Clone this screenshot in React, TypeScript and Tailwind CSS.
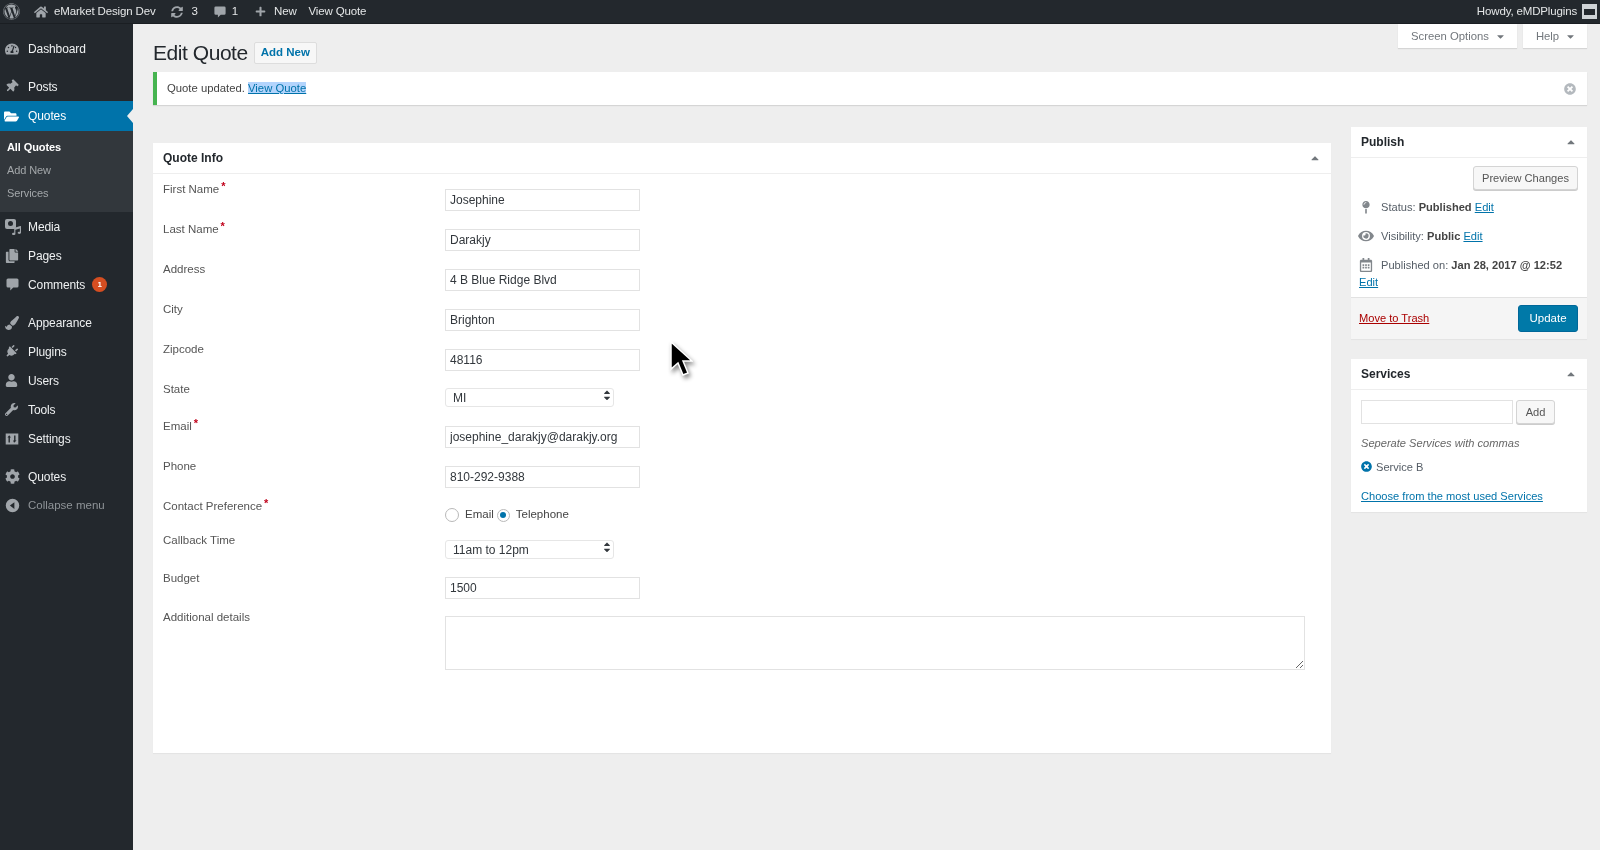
import type { ReactNode } from "react"
import {
  FaWordpress, FaHome, FaSyncAlt, FaPlus, FaTachometerAlt, FaThumbtack, FaFolderOpen,
  FaCopy, FaPaintBrush, FaPlug, FaUser, FaWrench, FaCog, FaEye, FaRegCalendarAlt, FaTimesCircle,
  FaMapPin, FaCaretDown, FaCaretUp, FaMusic,
} from "react-icons/fa"

function SettingsIcon() {
  return (
    <svg viewBox="0 0 20 20" className="w-[14px] h-[14px]" fill="currentColor">
      <path d="M1 2h18v16H1z M6 4.500 3.500 8H5v7h2V8h1.500z M13 15.500 16.500 12H15V5h-2v7h-1.500z" fillRule="evenodd" />
    </svg>
  )
}

function BubbleIcon({ size }: { size: string }) {
  return (
    <svg viewBox="0 0 20 20" className={size} fill="currentColor">
      <path d="M4 2h12a2 2 0 0 1 2 2v8a2 2 0 0 1-2 2h-5l-4 4v-4H4a2 2 0 0 1-2-2V4a2 2 0 0 1 2-2z" />
    </svg>
  )
}

function CollapseIcon() {
  return (
    <svg viewBox="0 0 20 20" className="w-[15px] h-[15px]" fill="currentColor">
      <path d="M10 1a9 9 0 1 1 0 18 9 9 0 0 1 0-18z M12.500 5.500 6.500 10l6 4.500z" fillRule="evenodd" />
    </svg>
  )
}

function MediaIcon() {
  return (
    <span className="relative block w-4 h-4">
      <span className="absolute left-0 top-0 w-[11px] h-[10px] rounded-[2px] bg-[#a0a5aa]" />
      <span className="absolute left-[3px] top-[2px] w-[5px] h-[5px] rounded-full bg-[#23282d]" />
      <FaMusic className="absolute right-0 bottom-0 text-[9px]" />
    </span>
  )
}

type MenuItem = { label: string; icon: ReactNode; gap?: boolean; badge?: boolean; dim?: boolean }

const topItems: MenuItem[] = [
  { label: "Dashboard", icon: <FaTachometerAlt className="text-[14px]" /> },
  { label: "Posts", icon: <FaThumbtack className="text-[13px] rotate-45" />, gap: true },
]

const lowerItems: MenuItem[] = [
  { label: "Media", icon: <MediaIcon /> },
  { label: "Pages", icon: <FaCopy className="text-[14px]" /> },
  { label: "Comments", icon: <BubbleIcon size="w-[15px] h-[15px]" />, badge: true },
  { label: "Appearance", icon: <FaPaintBrush className="text-[14px]" />, gap: true },
  { label: "Plugins", icon: <FaPlug className="text-[13px] rotate-45" /> },
  { label: "Users", icon: <FaUser className="text-[13px]" /> },
  { label: "Tools", icon: <FaWrench className="text-[13px]" /> },
  { label: "Settings", icon: <SettingsIcon /> },
  { label: "Quotes", icon: <FaCog className="text-[15px]" />, gap: true },
  { label: "Collapse menu", icon: <CollapseIcon />, dim: true },
]

function SideItem({ item }: { item: MenuItem }) {
  return (
    <div className={`flex items-center h-[29px] pl-[5px] ${item.gap ? "mt-[9px]" : ""}`}>
      <span className="w-[23px] flex justify-start text-[#a0a5aa]">{item.icon}</span>
      <span className={item.dim ? "text-[11.500px] text-[#8f9498]" : "text-[12px] tracking-[-0.1px] text-[#eef0f1]"}>{item.label}</span>
      {item.badge && (
        <span className="ml-[7px] w-[15px] h-[15px] rounded-full bg-[#d54e21] text-white text-[8px] font-bold flex items-center justify-center">1</span>
      )}
    </div>
  )
}

function Sidebar() {
  return (
    <aside className="w-[133px] shrink-0 bg-[#23282d] pt-[10px]">
      {topItems.map((item) => (
        <SideItem key={item.label} item={item} />
      ))}
      <div className="relative flex items-center h-[30px] pl-[4px] bg-[#0073aa] text-white">
        <span className="w-[24px]"><FaFolderOpen className="text-[15px]" /></span>
        <span className="text-[12px] tracking-[-0.1px]">Quotes</span>
        <span className="absolute right-0 top-[8px] border-y-[7px] border-r-[6px] border-y-transparent border-r-[#eeeeee]" />
      </div>
      <div className="bg-[#32373c] h-[81px] pl-[7px] pt-[5px] flex flex-col text-[11px] tracking-[-0.1px]">
        <span className="h-[23px] leading-[23px] font-bold text-white">All Quotes</span>
        <span className="h-[23px] leading-[23px] text-[#a3a7aa]">Add New</span>
        <span className="h-[23px] leading-[23px] text-[#a3a7aa]">Services</span>
      </div>
      <div>
        {lowerItems.map((item) => (
          <SideItem key={item.label + item.gap} item={item} />
        ))}
      </div>
    </aside>
  )
}

function TopBar() {
  return (
    <header className="h-[24px] bg-[#23282d] flex items-center text-[11.500px] text-[#e4e6e7] tracking-[-0.15px] border-b border-[#1a1e22]">
      <FaWordpress className="ml-[3px] text-[17px] text-[#a0a5aa]" />
      <FaHome className="ml-[14px] text-[14px] text-[#a0a5aa]" />
      <span className="ml-[6px]">eMarket Design Dev</span>
      <FaSyncAlt className="ml-[16px] text-[12px] text-[#a0a5aa]" />
      <span className="ml-[8px]">3</span>
      <span className="ml-[15px] text-[#a0a5aa]"><BubbleIcon size="w-[14px] h-[14px]" /></span>
      <span className="ml-[5px]">1</span>
      <FaPlus className="ml-[17px] text-[11px] text-[#a0a5aa]" />
      <span className="ml-[8px]">New</span>
      <span className="ml-[12px]">View Quote</span>
      <span className="ml-auto">Howdy, eMDPlugins</span>
      <span className="ml-[5px] mr-[3px] relative w-[15px] h-[15px] bg-[#cfd3d6]">
        <span className="absolute left-[2px] top-[5px] w-[11px] h-[6px] bg-[#23282d]" />
      </span>
    </header>
  )
}

function Req() {
  return <sup className="text-[#c0001a] font-bold text-[11px] ml-[2px] top-[-3px]">*</sup>
}

type Row = { label: string; req?: boolean; h: string; field: ReactNode }

function TextField({ value, top = "mt-[10px]" }: { value: string; top?: string }) {
  return (
    <input
      readOnly
      value={value}
      className={`${top} block w-[195px] h-[22px] px-[4px] bg-white border border-[#e2e2e2] text-[12px] text-[#32373c] outline-none`}
    />
  )
}

function SelectField({ value, top }: { value: string; top: string }) {
  return (
    <div className={`relative ${top} w-[169px] h-[19px]`}>
      <select className="appearance-none w-full h-full pl-[7px] bg-white border border-[#e6e6e6] rounded-[3px] text-[12px] text-[#32373c] outline-none" defaultValue={value}>
        <option>{value}</option>
      </select>
      <span className="absolute right-[2px] top-[2px] flex flex-col text-[#32373c] text-[10px] leading-none pointer-events-none">
        <FaCaretUp className="-mb-[4px]" />
        <FaCaretDown />
      </span>
    </div>
  )
}

const rows: Row[] = [
  { label: "First Name", req: true, h: "h-[40px]", field: <TextField value="Josephine" /> },
  { label: "Last Name", req: true, h: "h-[40px]", field: <TextField value="Darakjy" /> },
  { label: "Address", h: "h-[40px]", field: <TextField value="4 B Blue Ridge Blvd" /> },
  { label: "City", h: "h-[40px]", field: <TextField value="Brighton" /> },
  { label: "Zipcode", h: "h-[40px]", field: <TextField value="48116" /> },
  { label: "State", h: "h-[37px]", field: <SelectField value="MI" top="mt-[6px]" /> },
  { label: "Email", req: true, h: "h-[40px]", field: <TextField value="josephine_darakjy@darakjy.org" /> },
  { label: "Phone", h: "h-[40px]", field: <TextField value="810-292-9388" /> },
  {
    label: "Contact Preference",
    req: true,
    h: "h-[34px]",
    field: (
      <div className="flex items-center mt-[11px] h-[16px] text-[11.500px] text-[#444]">
        <span className="w-[14px] h-[14px] rounded-full border border-[#b9b9b9] bg-white" />
        <span className="ml-[6px]">Email</span>
        <span className="ml-[3px] w-[13px] h-[13px] rounded-full border border-[#b9b9b9] bg-white flex items-center justify-center">
          <span className="w-[6px] h-[6px] rounded-full bg-[#0073aa]" />
        </span>
        <span className="ml-[6px]">Telephone</span>
      </div>
    ),
  },
  { label: "Callback Time", h: "h-[38px]", field: <SelectField value="11am to 12pm" top="mt-[7px]" /> },
  { label: "Budget", h: "h-[39px]", field: <TextField value="1500" top="mt-[9px]" /> },
  {
    label: "Additional details",
    h: "h-[70px]",
    field: (
      <textarea readOnly className="mt-[9px] block w-[860px] h-[54px] bg-white border border-[#e2e2e2] outline-none" />
    ),
  },
]

function BoxHeader({ title }: { title: string }) {
  return (
    <div className="h-[31px] flex items-center justify-between pl-[10px] pr-[10px] border-b border-[#eeeeee]">
      <span className="text-[12px] font-bold text-[#23282d]">{title}</span>
      <FaCaretUp className="text-[12px] text-[#72777c]" />
    </div>
  )
}

function PublishBox() {
  return (
    <section className="bg-white shadow-[0_1px_1px_rgba(0,0,0,0.04)]">
      <BoxHeader title="Publish" />
      <div className="h-[139px] pl-[8px] pr-[9px] pt-[8px] text-[11.100px] text-[#555d66]">
        <div className="flex justify-end">
          <button className="h-[24px] w-[105px] border border-[#d4d4d4] rounded-[3px] bg-[#f7f7f7] text-[11.100px] text-[#555] shadow-[0_1px_0_#ccc]">Preview Changes</button>
        </div>
        <div className="flex items-center mt-[7px] h-[20px]">
          <FaMapPin className="-ml-[3px] w-[20px] text-[13px] text-[#82878c]" />
          <span className="ml-[5px]">Status: <b className="text-[#444]">Published</b> <u className="text-[#0073aa]">Edit</u></span>
        </div>
        <div className="flex items-center mt-[9px] h-[20px]">
          <FaEye className="-ml-[3px] w-[20px] text-[14px] text-[#82878c]" />
          <span className="ml-[5px]">Visibility: <b className="text-[#444]">Public</b> <u className="text-[#0073aa]">Edit</u></span>
        </div>
        <div className="flex items-center mt-[9px] h-[20px]">
          <FaRegCalendarAlt className="-ml-[3px] w-[20px] text-[14px] text-[#82878c]" />
          <span className="ml-[5px] whitespace-nowrap">Published on: <b className="text-[#444]">Jan 28, 2017 @ 12:52</b></span>
        </div>
        <u className="block text-[#0073aa] leading-[14px]">Edit</u>
      </div>
      <div className="h-[42px] bg-[#f5f5f5] border-t border-[#e2e2e2] flex items-center justify-between pl-[8px] pr-[9px]">
        <u className="text-[11.100px] text-[#a00]">Move to Trash</u>
        <button className="w-[60px] h-[27px] rounded-[3px] bg-[#0079a8] border border-[#006799] text-white text-[11.500px]">Update</button>
      </div>
    </section>
  )
}

function ServicesBox() {
  return (
    <section className="mt-[20px] bg-white shadow-[0_1px_1px_rgba(0,0,0,0.04)]">
      <BoxHeader title="Services" />
      <div className="h-[122px] px-[10px] pt-[10px] text-[11.100px] text-[#555d66]">
        <div className="flex items-center">
          <input readOnly className="w-[152px] h-[24px] border border-[#e2e2e2] bg-white outline-none" />
          <button className="ml-[3px] w-[39px] h-[24px] border border-[#d4d4d4] rounded-[3px] bg-[#f7f7f7] text-[#555] shadow-[0_1px_0_#ccc]">Add</button>
        </div>
        <p className="mt-[11px] italic text-[11.100px] text-[#666]">Seperate Services with commas</p>
        <div className="flex items-center mt-[7px]">
          <FaTimesCircle className="text-[11px] text-[#0073aa]" />
          <span className="ml-[4px]">Service B</span>
        </div>
        <u className="block mt-[13px] text-[#0073aa]">Choose from the most used Services</u>
      </div>
    </section>
  )
}

function Cursor() {
  return (
    <svg viewBox="0 0 24 38" className="absolute left-[669px] top-[341px] w-[24px] h-[38px] drop-shadow-[2px_3px_2px_rgba(0,0,0,0.45)]">
      <path d="M2 1v27l7-6 5 12 5-2-5-12h9z" fill="#000" stroke="#fff" strokeWidth="1.500" />
    </svg>
  )
}

export default function App() {
  return (
    <div className="relative w-[1600px] h-[850px] overflow-hidden flex flex-col bg-[#eeeeee] blur-[0.6px] font-['Liberation_Sans',Arial,sans-serif]">
      <TopBar />
      <div className="flex flex-1 min-h-0">
        <Sidebar />
        <main className="flex-1 pl-[20px] pr-[13px]">
          <div className="h-[48px] flex justify-between">
            <div className="flex items-center h-[58px]">
              <h1 className="text-[21px] text-[#23282d] tracking-[-0.45px]">Edit Quote</h1>
              <button className="ml-[6px] h-[22px] px-[6px] border border-[#dddddd] rounded-[2px] bg-[#f7f7f7] text-[11.500px] font-bold text-[#0073aa]">Add New</button>
            </div>
            <div className="flex gap-[6px]">
              <div className="w-[119px] h-[24px] pt-[1px] pl-[2px] bg-white shadow-[0_1px_1px_rgba(0,0,0,0.1)] flex items-center justify-center gap-[6px] text-[11.300px] text-[#72777c]">
                Screen Options <FaCaretDown className="text-[11px]" />
              </div>
              <div className="w-[64px] h-[24px] pt-[1px] pl-[2px] bg-white shadow-[0_1px_1px_rgba(0,0,0,0.1)] flex items-center justify-center gap-[6px] text-[11.300px] text-[#72777c]">
                Help <FaCaretDown className="text-[11px]" />
              </div>
            </div>
          </div>
          <div className="h-[33px] bg-white border-l-[4px] border-[#46b450] flex items-center pl-[10px] pr-[11px] justify-between shadow-[0_1px_1px_rgba(0,0,0,0.1)]">
            <span className="text-[11.300px] text-[#444]">
              Quote updated. <u className="bg-[#b3d4fc] text-[#0073aa]">View Quote</u>
            </span>
            <FaTimesCircle className="text-[12px] text-[#b4b9be]" />
          </div>
          <div className="flex gap-[20px] mt-[22px]">
            <section className="mt-[16px] w-[1178px] h-[610px] bg-white shadow-[0_1px_1px_rgba(0,0,0,0.04)]">
              <BoxHeader title="Quote Info" />
              <div className="pt-[5px] pl-[10px]">
                {rows.map((row) => (
                  <div key={row.label} className={`flex ${row.h}`}>
                    <div className="w-[282px] shrink-0 leading-[20px] text-[11.500px] text-[#555]">
                      {row.label}
                      {row.req && <Req />}
                    </div>
                    <div>{row.field}</div>
                  </div>
                ))}
              </div>
            </section>
            <div className="flex-1">
              <PublishBox />
              <ServicesBox />
            </div>
          </div>
        </main>
      </div>
      <Cursor />
    </div>
  )
}
